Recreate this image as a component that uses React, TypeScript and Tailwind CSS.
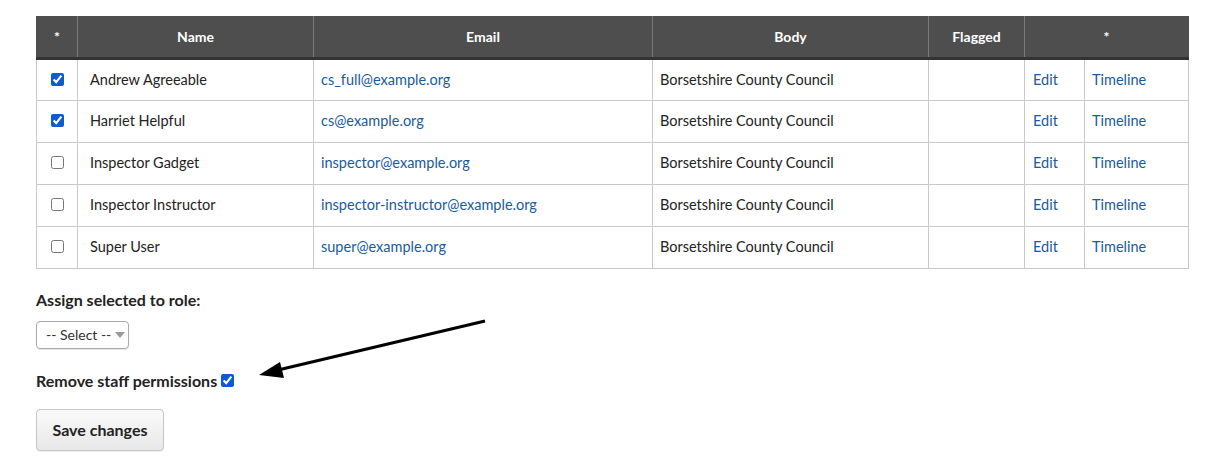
import React from "react";

type User = {
  name: string;
  email: string;
  body: string;
  checked: boolean;
};

const users: User[] = [
  { name: "Andrew Agreeable", email: "cs_full@example.org", body: "Borsetshire County Council", checked: true },
  { name: "Harriet Helpful", email: "cs@example.org", body: "Borsetshire County Council", checked: true },
  { name: "Inspector Gadget", email: "inspector@example.org", body: "Borsetshire County Council", checked: false },
  { name: "Inspector Instructor", email: "inspector-instructor@example.org", body: "Borsetshire County Council", checked: false },
  { name: "Super User", email: "super@example.org", body: "Borsetshire County Council", checked: false },
];

function App() {
  return (
    <div
      className="relative bg-white text-[#222] px-[36px] pt-[16px] w-[1213px] h-[468px]"
      style={{ fontFamily: "Lato, 'Liberation Sans', sans-serif" }}
    >
      <table className="w-[1152px] border-collapse text-[14.5px] table-fixed">
        <colgroup>
          <col className="w-[41px]" />
          <col className="w-[236px]" />
          <col className="w-[339px]" />
          <col className="w-[276px]" />
          <col className="w-[96px]" />
          <col className="w-[60px]" />
          <col className="w-[104px]" />
        </colgroup>
        <thead>
          <tr className="h-[42px] bg-[#4e4e4e] text-white text-[14px] font-bold border-b-[3px] border-[#333]">
            <th className="border-x border-[#7a7a7a] border-l-[#4e4e4e]">*</th>
            <th className="border-x border-[#7a7a7a]">Name</th>
            <th className="border-x border-[#7a7a7a]">Email</th>
            <th className="border-x border-[#7a7a7a]">Body</th>
            <th className="border-x border-[#7a7a7a]">Flagged</th>
            <th colSpan={2} className="border-x border-[#7a7a7a] border-r-[#4e4e4e]">*</th>
          </tr>
        </thead>
        <tbody>
          {users.map((u) => (
            <tr key={u.email} className="h-[42px]">
              <td className="border border-[#c9c9c9] text-center pb-[3px]">
                <input
                  type="checkbox"
                  defaultChecked={u.checked}
                  className="w-[13px] h-[13px] align-middle accent-[#0b5bd3]"
                />
              </td>
              <td className="border border-[#c9c9c9] px-[12px]">{u.name}</td>
              <td className="border border-[#c9c9c9] px-[7px]">
                <a href="#" className="text-[#195b9e]">{u.email}</a>
              </td>
              <td className="border border-[#c9c9c9] px-[7px]">{u.body}</td>
              <td className="border border-[#c9c9c9]"></td>
              <td className="border border-[#c9c9c9] px-[8px]">
                <a href="#" className="text-[#195b9e]">Edit</a>
              </td>
              <td className="border border-[#c9c9c9] px-[7px]">
                <a href="#" className="text-[#195b9e]">Timeline</a>
              </td>
            </tr>
          ))}
        </tbody>
      </table>

      <div className="mt-[20px] text-[16px] font-bold leading-[22px]">Assign selected to role:</div>
      <div className="mt-[10px]">
        <div className="inline-flex items-center h-[28px] w-[93px] border border-[#a9a9a9] rounded-[4px] pl-[9px] text-[14px] text-[#333] shadow-[0_1px_1px_rgba(0,0,0,0.1)]">
          <span>-- Select --</span>
          <span className="ml-[4px] w-0 h-0 border-x-[5px] border-x-transparent border-t-[6px] border-t-[#999]" />
        </div>
      </div>
      <div className="mt-[21px] flex items-center text-[16px] font-bold leading-[22px]">
        <span>Remove staff permissions</span>
        <input type="checkbox" defaultChecked className="ml-[4px] w-[13px] h-[13px] accent-[#0b5bd3]" />
      </div>
      <button className="mt-[17px] h-[42px] w-[128px] border border-[#c6c6c6] rounded-[4px] bg-gradient-to-b from-[#fafafa] to-[#e8e8e8] text-[16px] font-bold text-[#222] shadow-[0_1px_1px_rgba(0,0,0,0.08)]">
        Save changes
      </button>

      <svg className="absolute left-0 top-0 pointer-events-none" width="1213" height="468">
        <line x1="485" y1="321" x2="278" y2="370" stroke="#000" strokeWidth="3" />
        <polygon points="259,375 280,362 284,378" fill="#000" />
      </svg>
    </div>
  );
}

export default App;
